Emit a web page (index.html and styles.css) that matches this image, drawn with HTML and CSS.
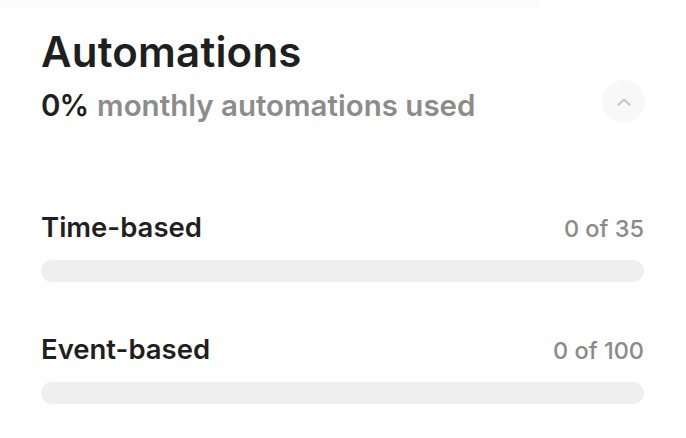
FILE: index.html
```html
<!DOCTYPE html>
<html lang="en">
<head>
<meta charset="utf-8">
<title>Automations</title>
<link rel="stylesheet" href="styles.css">
</head>
<body>
<div class="top-edge"></div>
<section class="panel">
  <h1 class="title">Automations</h1>
  <div class="summary">
    <p class="usage"><span class="pct">0%</span><span class="usage-label">monthly automations used</span></p>
    <button class="collapse" aria-label="Collapse">
      <svg width="14" height="8" viewBox="0 0 14 8" fill="none"><path d="M1.5 6.8 L7 1.5 L12.5 6.8" stroke="#c6c6c6" stroke-width="2" stroke-linecap="round" stroke-linejoin="round"/></svg>
    </button>
  </div>
  <div class="meters">
    <div class="meter">
      <div class="meter-head"><span class="meter-name">Time-based</span><span class="meter-count">0 of 35</span></div>
      <div class="track"><div class="fill" style="width:0%"></div></div>
    </div>
    <div class="meter">
      <div class="meter-head"><span class="meter-name">Event-based</span><span class="meter-count">0 of 100</span></div>
      <div class="track"><div class="fill" style="width:0%"></div></div>
    </div>
  </div>
</section>
</body>
</html>
```
FILE: styles.css
```css
html, body {
  margin: 0;
  padding: 0;
  background: #ffffff;
}
body {
  font-family: Inter, "Noto Sans", "Liberation Sans", sans-serif;
  color: #1f1f1f;
}
.top-edge {
  width: 540px;
  height: 8px;
  background: #fbfbfb;
}
.panel {
  padding: 0 42px 0 41px;
}
.title {
  margin: 16px 0 0;
  font-size: 42px;
  line-height: 56px;
  font-weight: 600;
  letter-spacing: 0.2px;
  color: #1f1f1f;
}
.summary {
  display: flex;
  align-items: flex-start;
  justify-content: space-between;
}
.usage {
  margin: 5px 0 0;
  font-size: 29.5px;
  line-height: 40px;
  font-weight: 600;
}
.pct {
  color: #1f1f1f;
  margin-right: 9px;
  letter-spacing: -1px;
}
.usage-label {
  color: #8c8c8c;
}
.collapse {
  width: 43px;
  height: 43px;
  border-radius: 50%;
  border: none;
  background: #f8f8f8;
  display: flex;
  align-items: center;
  justify-content: center;
  padding: 0;
  margin-right: -1px;
}
.meters {
  margin-top: 84px;
  display: flex;
  flex-direction: column;
  gap: 49px;
}
.meter-head {
  display: flex;
  justify-content: space-between;
  align-items: baseline;
}
.meter-name {
  font-size: 27.5px;
  line-height: 36px;
  font-weight: 600;
  color: #1f1f1f;
}
.meter-count {
  font-size: 23.5px;
  font-weight: 500;
  color: #8a8a8a;
}
.track {
  margin-top: 15px;
  height: 22px;
  border-radius: 11px;
  background: #efefef;
  overflow: hidden;
}
.fill {
  height: 100%;
  background: #1f1f1f;
}
```
